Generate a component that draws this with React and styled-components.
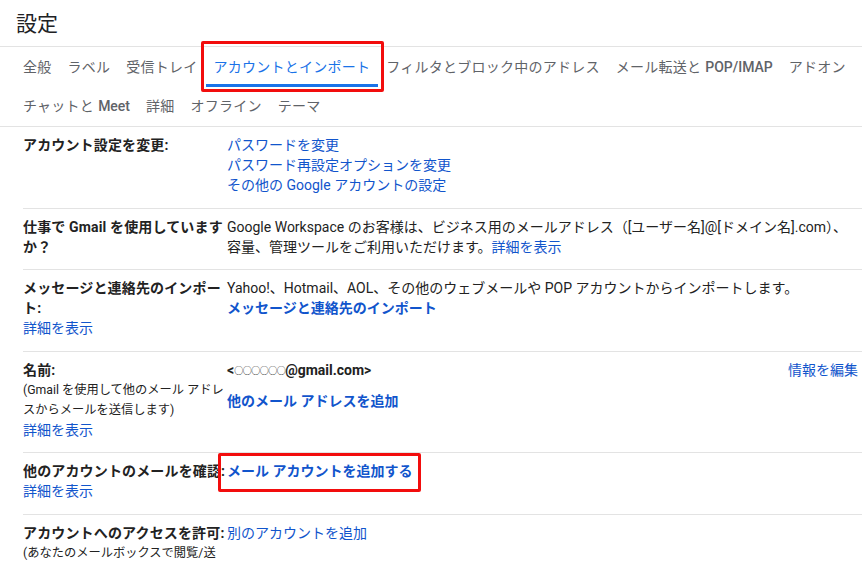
import React from 'react';
import styled, { createGlobalStyle } from 'styled-components';

const GlobalStyle = createGlobalStyle`
  body {
    margin: 0;
    background: #fff;
    font-family: Roboto, "Noto Sans CJK JP", Arial, sans-serif;
    color: #222;
  }
`;

const Page = styled.div`
  width: 862px;
  height: 565px;
  overflow: hidden;
`;

const Header = styled.div`
  height: 47px;
  box-sizing: border-box;
  display: flex;
  align-items: center;
  padding: 0 0 3px 16px;
  border-bottom: 1px solid #e3e3e3;
  font-size: 21px;
  color: #202124;
`;

const Tabs = styled.div`
  display: flex;
  flex-wrap: wrap;
  padding: 1px 0 0 15px;
  border-bottom: 1px solid #e3e3e3;
`;

const Tab = styled.div`
  position: relative;
  height: 39px;
  box-sizing: border-box;
  padding: 0 8px;
  display: flex;
  align-items: center;
  font-size: 14px;
  letter-spacing: 0.25px;
  white-space: nowrap;
  color: ${({ $active }) => ($active ? '#1a73e8' : '#5f6368')};
  border-bottom: 3px solid ${({ $active }) => ($active ? '#1a73e8' : 'transparent')};
`;

const Latin = styled.span`
  font-weight: 500;
  margin-left: 4px;
  letter-spacing: 0;
`;

const Highlight = styled.span`
  position: absolute;
  top: -7px;
  left: -5px;
  right: -6px;
  bottom: -8px;
  border: 3px solid #f20d0d;
  border-radius: 2px;
  pointer-events: none;
`;

const Row = styled.div`
  margin-left: 23px;
  display: grid;
  grid-template-columns: 204px 1fr auto;
  padding: 8px 4px 12.5px 0;
  border-bottom: 1px solid #e3e3e3;
  font-size: 14px;
  line-height: 20px;
`;

const Label = styled.div`
  font-weight: bold;
  letter-spacing: 0.15px;
  color: #222;
`;

const LabelCell = styled.div`
  display: flex;
  flex-direction: column;
  align-items: flex-start;
`;

const Note = styled.div`
  font-size: 12.25px;
  color: #222;
`;

const Value = styled.div`
  display: flex;
  flex-direction: column;
  align-items: flex-start;
  white-space: nowrap;
`;

const Text = styled.div`
  font-weight: ${({ $bold }) => ($bold ? 'bold' : 'normal')};
`;

const Dots = styled.span`
  font-size: 9px;
  font-weight: normal;
  letter-spacing: -0.5px;
  vertical-align: 1px;
`;

const Link = styled.a`
  position: relative;
  display: inline-block;
  color: #15c;
  text-decoration: none;
  cursor: pointer;
  font-weight: ${({ $bold }) => ($bold ? 'bold' : 'normal')};
  margin-top: ${({ $gap }) => $gap || 0}px;
`;

const Boxed = styled.span`
  position: absolute;
  top: -8px;
  left: -9px;
  right: -9px;
  bottom: -11px;
  border: 3px solid #f20d0d;
  border-radius: 2px;
`;

const tabs = [
  ['全般'],
  ['ラベル'],
  ['受信トレイ'],
  ['アカウントとインポート', true],
  ['フィルタとブロック中のアドレス'],
  ['メール転送と', false, 'POP/IMAP'],
  ['アドオン'],
  ['チャットと', false, 'Meet'],
  ['詳細'],
  ['オフライン'],
  ['テーマ'],
];

export default function App() {
  return (
    <Page>
      <GlobalStyle />
      <Header>設定</Header>
      <Tabs>
        {tabs.map(([jp, active, en]) => (
          <Tab key={jp} $active={active}>
            <span>
              {jp}
              {en && <Latin>{en}</Latin>}
            </span>
            {active && <Highlight />}
          </Tab>
        ))}
      </Tabs>

      <Row>
        <Label>アカウント設定を変更:</Label>
        <Value>
          <Link>パスワードを変更</Link>
          <Link>パスワード再設定オプションを変更</Link>
          <Link>その他の Google アカウントの設定</Link>
        </Value>
      </Row>

      <Row>
        <Label>仕事で Gmail を使用していますか？</Label>
        <Value>
          <Text>Google Workspace のお客様は、ビジネス用のメールアドレス（[ユーザー名]@[ドメイン名].com）、</Text>
          <Text>
            容量、管理ツールをご利用いただけます。<Link>詳細を表示</Link>
          </Text>
        </Value>
      </Row>

      <Row>
        <LabelCell>
          <Label>メッセージと連絡先のインポート:</Label>
          <Link>詳細を表示</Link>
        </LabelCell>
        <Value>
          <Text>Yahoo!、Hotmail、AOL、その他のウェブメールや POP アカウントからインポートします。</Text>
          <Link $bold>メッセージと連絡先のインポート</Link>
        </Value>
      </Row>

      <Row>
        <LabelCell>
          <Label>名前:</Label>
          <Note>(Gmail を使用して他のメール アドレスからメールを送信します)</Note>
          <Link>詳細を表示</Link>
        </LabelCell>
        <Value>
          <Text $bold>
            &lt;<Dots>○○○○○○</Dots>@gmail.com&gt;
          </Text>
          <Link $bold $gap={10}>他のメール アドレスを追加</Link>
        </Value>
        <div>
          <Link>情報を編集</Link>
        </div>
      </Row>

      <Row>
        <LabelCell>
          <Label>他のアカウントのメールを確認:</Label>
          <Link>詳細を表示</Link>
        </LabelCell>
        <Value>
          <Link $bold>
            メール アカウントを追加する
            <Boxed />
          </Link>
        </Value>
      </Row>

      <Row>
        <LabelCell>
          <Label>アカウントへのアクセスを許可:</Label>
          <Note>(あなたのメールボックスで閲覧/送信することを他のユーザーに許可します)</Note>
        </LabelCell>
        <Value>
          <Link>別のアカウントを追加</Link>
        </Value>
      </Row>
    </Page>
  );
}
